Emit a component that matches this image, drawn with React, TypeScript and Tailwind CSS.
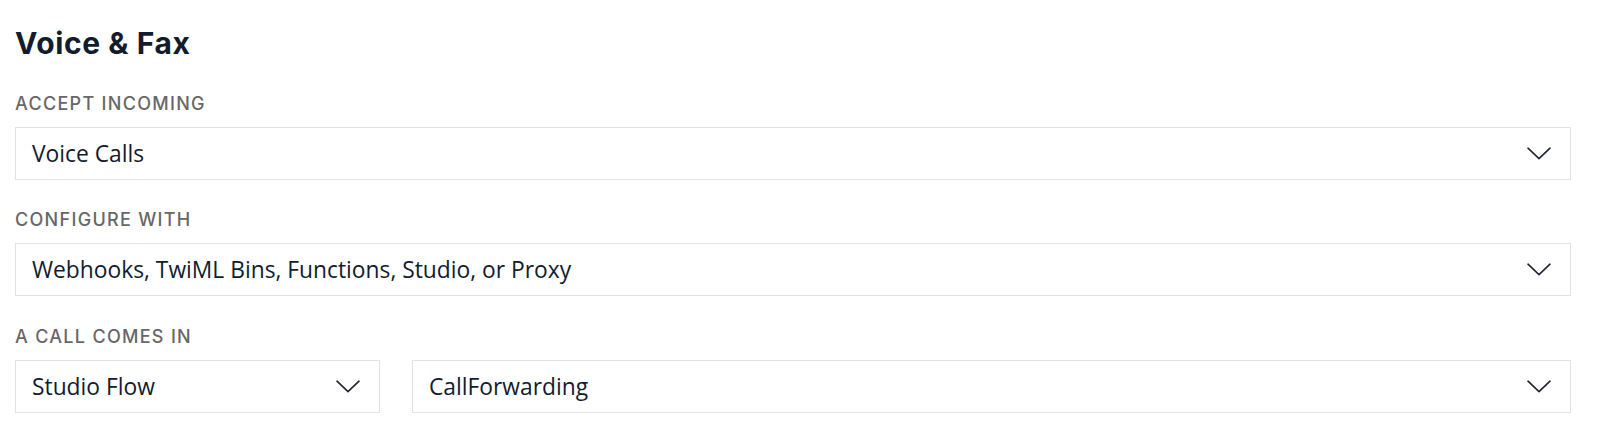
import React from "react";

function Chevron() {
  return (
    <svg width="24" height="13" viewBox="0 0 24 13" fill="none" className="shrink-0">
      <path d="M1 1.2 L12 11.6 L23 1.2" stroke="#1f2430" strokeWidth="1.6" strokeLinecap="round" strokeLinejoin="round" />
    </svg>
  );
}

function SelectBox({ value, className }: { value: string; className?: string }) {
  return (
    <div
      className={
        "h-[53px] border border-[#e2e2e2] bg-white flex items-center justify-between pl-[16px] pr-[19px] " +
        (className ?? "")
      }
    >
      <span className="font-['Open_Sans',sans-serif] text-[22.8px] leading-[30px] text-[#121c2d]">{value}</span>
      <Chevron />
    </div>
  );
}

function Label({ children }: { children: React.ReactNode }) {
  return (
    <div className="font-['Inter',sans-serif] text-[18px] leading-[20px] font-medium tracking-[1.3px] uppercase text-[#676767] mb-[13px]">
      {children}
    </div>
  );
}

export default function App() {
  return (
    <div className="w-[1600px] h-[430px] bg-white pl-[15px] pr-[29px] pt-[25px] overflow-hidden">
      <h2 className="font-['Inter',sans-serif] text-[30px] leading-[36px] font-bold tracking-[0.6px] text-[#121c2d]">Voice &amp; Fax</h2>
      <div className="mt-[33px] flex flex-col">
        <div className="mb-[30px]">
          <Label>Accept Incoming</Label>
          <SelectBox value="Voice Calls" />
        </div>
        <div className="mb-[31px]">
          <Label>Configure With</Label>
          <SelectBox value="Webhooks, TwiML Bins, Functions, Studio, or Proxy" />
        </div>
        <div>
          <Label>A Call Comes In</Label>
          <div className="flex gap-[32px]">
            <SelectBox value="Studio Flow" className="w-[365px] shrink-0" />
            <SelectBox value="CallForwarding" className="flex-1" />
          </div>
        </div>
      </div>
    </div>
  );
}
